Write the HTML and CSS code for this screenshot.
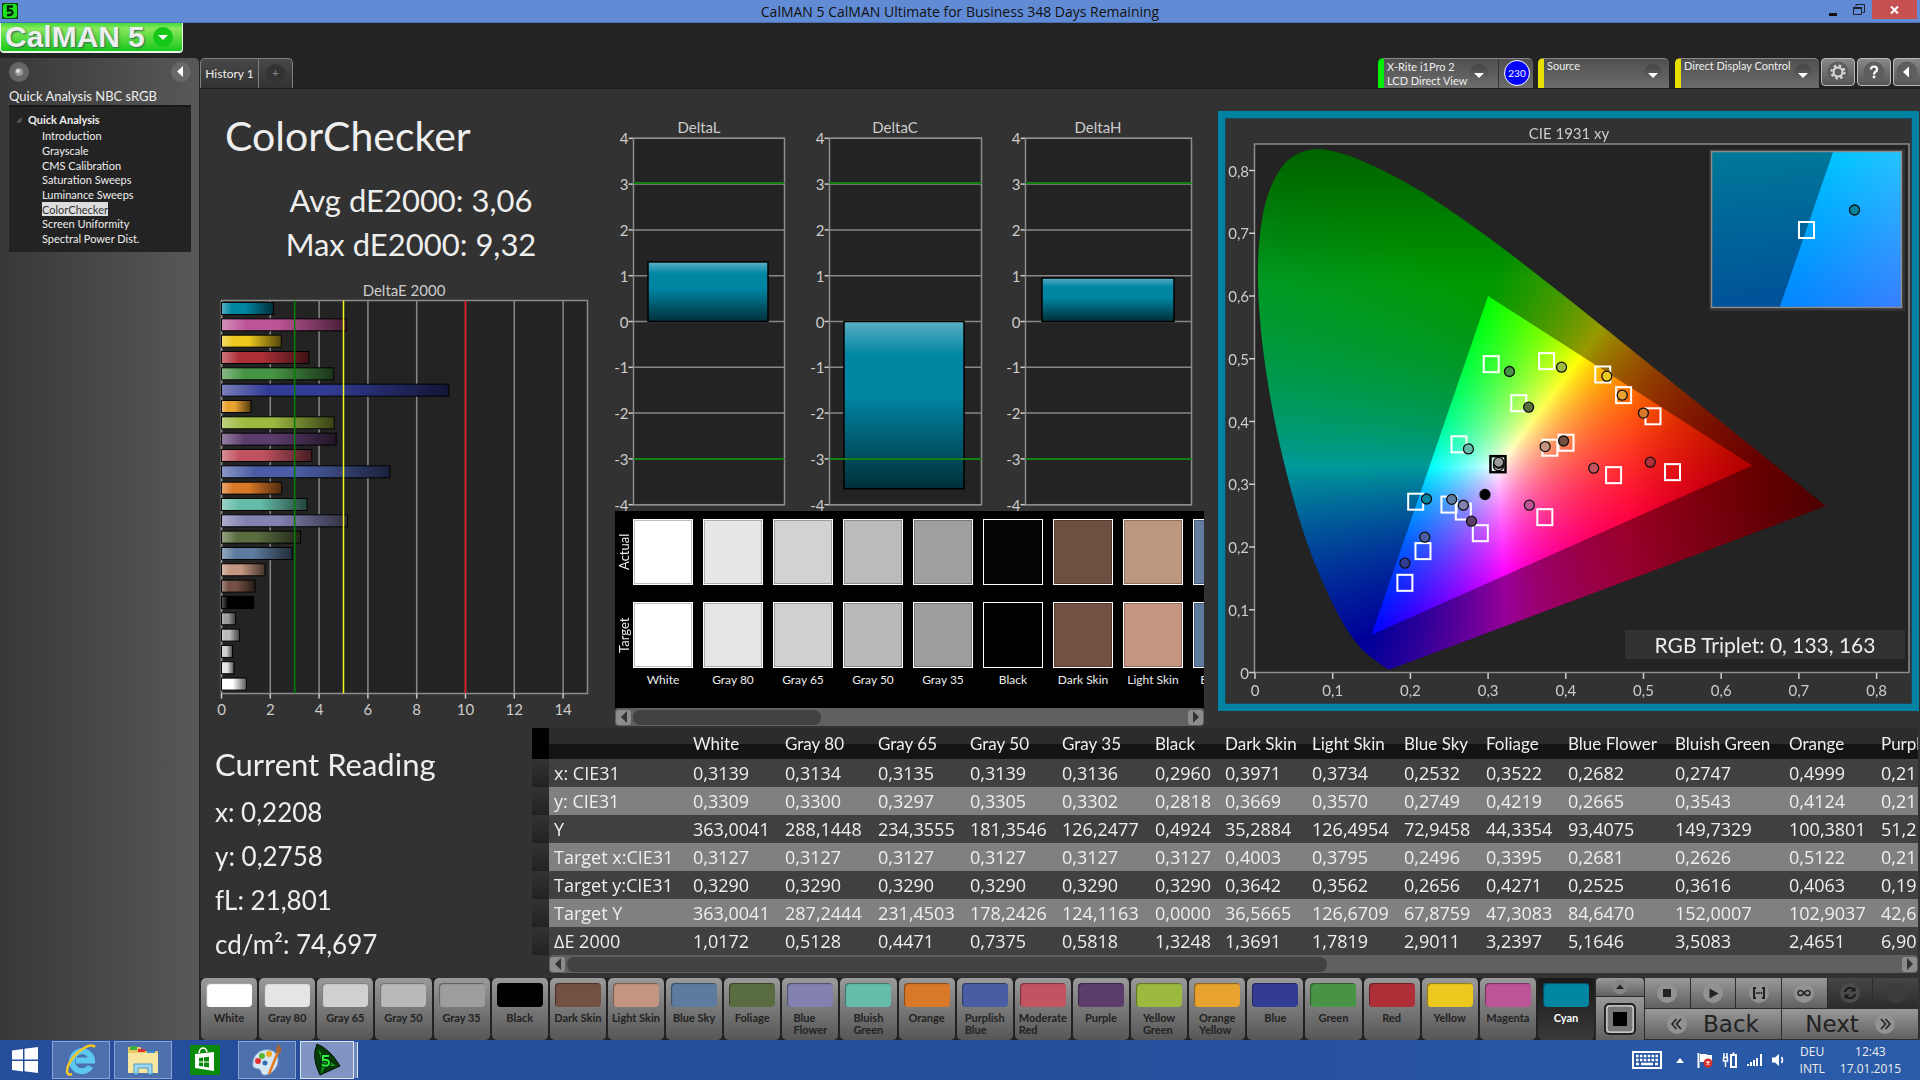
FILE: index.html
```html
<!DOCTYPE html>
<html lang="en">
<head>
<meta charset="utf-8">
<title>CalMAN 5 CalMAN Ultimate for Business 348 Days Remaining</title>
<link rel="stylesheet" href="styles.css">
</head>
<body>
<div class="titlebar">
  <svg class="app-icon" viewBox="0 0 16 16" aria-hidden="true"><rect width="16" height="16" fill="#0a4a0a"/><rect x="1" y="1" width="14" height="14" rx="3" fill="#1ee21e"/><path d="M11 3.500H6V7.500Q10.500 6.500 10.500 9.500Q10.500 12.500 5 12" fill="none" stroke="#021" stroke-width="2.400"/></svg>
  <span class="titlebar-text">CalMAN 5 CalMAN Ultimate for Business 348 Days Remaining</span>
  <div class="window-buttons">
    <button class="win-btn" aria-label="Minimize"><svg width="10" height="14" viewBox="0 0 10 14"><path d="M1 11.500h8" stroke="#111" stroke-width="3"/></svg></button>
    <button class="win-btn" aria-label="Restore"><svg width="12" height="12" viewBox="0 0 12 12" fill="none" stroke="#1b2233"><path d="M3 2.500V.500H11.500V8.500H9.500"/><path d="M.500 4.500h8v6h-8z"/><path d="M0 4h9" stroke-width="2"/></svg></button>
    <button class="win-btn win-close" aria-label="Close"><svg width="9" height="8" viewBox="0 0 9 8"><path d="M1 .500l7 7M8 .500l-7 7" stroke="#fff" stroke-width="2"/></svg></button>
  </div>
</div>

<div class="brandbar">
  <button class="logo"><span class="logo-text">CalMAN</span><span class="logo-text">5</span>
    <svg width="20" height="20" viewBox="0 0 20 20" aria-hidden="true"><circle cx="10" cy="10" r="10" fill="#15c818"/><path d="M5 8h10l-5 5z" fill="#fff"/></svg>
  </button>
</div>

<div class="app">
  <aside class="sidebar">
    <div class="sidebar-tools">
      <button class="round" aria-label="Pin"><svg width="20" height="20" viewBox="0 0 20 20"><circle cx="10" cy="10" r="10" fill="#666"/><circle cx="10" cy="10" r="4" fill="#999"/><circle cx="9" cy="9" r="2" fill="#ddd"/></svg></button>
      <button class="round" aria-label="Collapse"><svg width="20" height="20" viewBox="0 0 20 20"><circle cx="10" cy="10" r="10" fill="#686868"/><path d="M12 4v11l-6-5.500z" fill="#fff"/></svg></button>
    </div>
    <h2 class="sidebar-title">Quick Analysis NBC sRGB</h2>
    <nav class="tree">
      <div class="tree-head"><svg width="6" height="6" viewBox="0 0 6 6" aria-hidden="true"><path d="M5.500 0v5.500H0z" fill="#555"/></svg>Quick Analysis</div>
      <a href="#">Introduction</a>
      <a href="#">Grayscale</a>
      <a href="#">CMS Calibration</a>
      <a href="#">Saturation Sweeps</a>
      <a href="#">Luminance Sweeps</a>
      <a href="#" class="current">ColorChecker</a>
      <a href="#">Screen Uniformity</a>
      <a href="#">Spectral Power Dist.</a>
    </nav>
  </aside>

  <div class="content">
    <div class="toolbar">
      <div class="tabs">
        <button class="tab">History 1</button>
        <button class="tab tab-add" aria-label="Add history"><span class="plus">+</span></button>
      </div>
      <div class="devices">
        <div class="device device-meter"><button class="device-name">X-Rite i1Pro 2<br>LCD Direct View<span class="drop"></span></button><button class="count">230</button></div>
        <div class="device device-source"><button class="device-name">Source<span class="drop"></span></button></div>
        <div class="device device-display"><button class="device-name">Direct Display Control<span class="drop"></span></button></div>
        <button class="tool" aria-label="Settings"><svg width="22" height="22" viewBox="0 0 22 22"><circle cx="11" cy="11" r="10.500" fill="#5e5e5e"/><circle cx="11" cy="11" r="4.500" fill="none" stroke="#ddd" stroke-width="2"/><circle cx="11" cy="11" r="6.500" fill="none" stroke="#ddd" stroke-width="2" stroke-dasharray="2.500 2.600"/></svg></button>
        <button class="tool" aria-label="Help"><svg width="22" height="22" viewBox="0 0 22 22"><circle cx="11" cy="11" r="10.500" fill="#5e5e5e"/><path d="M8 8.500Q8 5.500 11 5.500T14 8.500Q14 10 12.500 10.800T11 13.500" fill="none" stroke="#fff" stroke-width="2.200"/><circle cx="11" cy="16" r="1.400" fill="#fff"/></svg></button>
        <button class="tool tool-last" aria-label="Collapse panel"><svg width="22" height="22" viewBox="0 0 22 22"><circle cx="11" cy="11" r="10.500" fill="#5e5e5e"/><path d="M13 5.500v11l-6-5.500z" fill="#fff"/></svg></button>
      </div>
    </div>

    <main class="workspace">
      <div class="overview">
        <section class="summary">
          <h1>ColorChecker</h1>
          <p class="stat">Avg dE2000: 3,06<br>Max dE2000: 9,32</p>
          <svg class="chart" id="delta-e" viewBox="0 0 406 440" role="img" aria-label="DeltaE 2000"></svg>
        </section>
        <section class="deltas">
          <div class="delta-charts">
            <svg class="chart" id="delta-l" viewBox="0 0 196 401" role="img" aria-label="DeltaL"></svg>
            <svg class="chart" id="delta-c" viewBox="0 0 196 401" role="img" aria-label="DeltaC"></svg>
            <svg class="chart" id="delta-h" viewBox="0 0 206 401" role="img" aria-label="DeltaH"></svg>
          </div>
          <div class="swatches">
            <div class="swatch-row"><span class="swatch-side">Actual</span><div class="swatch-list" id="actual"></div></div>
            <div class="swatch-row"><span class="swatch-side">Target</span><div class="swatch-list" id="target"></div></div>
            <div class="swatch-names" id="names"></div>
          </div>
          <div class="scrollbar"><button class="scroll-arrow" aria-label="Scroll left"><svg width="8" height="12" viewBox="0 0 8 12"><path d="M7 0v12L1 6z" fill="#333"/></svg></button><span class="scroll-track"><span class="thumb thumb-short"></span></span><button class="scroll-arrow" aria-label="Scroll right"><svg width="8" height="12" viewBox="0 0 8 12"><path d="M1 0v12l6-6z" fill="#333"/></svg></button></div>
        </section>
        <section class="cie">
          <div class="cie-panel">
            <canvas id="gamut" width="687" height="586"></canvas>
            <svg class="chart" id="cie-plot" viewBox="0 0 687 586" role="img" aria-label="CIE 1931 xy"></svg>
          </div>
        </section>
      </div>

      <div class="details">
        <section class="reading">
          <h2>Current Reading</h2>
          <p>x: 0,2208</p>
          <p>y: 0,2758</p>
          <p>fL: 21,801</p>
          <p>cd/m²: 74,697</p>
        </section>
        <section class="data">
          <div class="table-wrap">
          <table>
            <colgroup><col class="c-grip"><col class="c-label"><col class="c-92"><col class="c-93"><col class="c-92"><col class="c-92"><col class="c-93"><col class="c-70"><col class="c-87"><col class="c-92"><col class="c-82"><col class="c-82"><col class="c-107"><col class="c-114"><col class="c-92"><col class="c-114"></colgroup>
            <thead><tr><td></td><td></td><th>White</th><th>Gray 80</th><th>Gray 65</th><th>Gray 50</th><th>Gray 35</th><th>Black</th><th>Dark Skin</th><th>Light Skin</th><th>Blue Sky</th><th>Foliage</th><th>Blue Flower</th><th>Bluish Green</th><th>Orange</th><th>Purplish Blue</th></tr></thead>
            <tbody>
            <tr><td></td><th>x: CIE31</th><td>0,3139</td><td>0,3134</td><td>0,3135</td><td>0,3139</td><td>0,3136</td><td>0,2960</td><td>0,3971</td><td>0,3734</td><td>0,2532</td><td>0,3522</td><td>0,2682</td><td>0,2747</td><td>0,4999</td><td>0,21</td></tr>
            <tr><td></td><th>y: CIE31</th><td>0,3309</td><td>0,3300</td><td>0,3297</td><td>0,3305</td><td>0,3302</td><td>0,2818</td><td>0,3669</td><td>0,3570</td><td>0,2749</td><td>0,4219</td><td>0,2665</td><td>0,3543</td><td>0,4124</td><td>0,21</td></tr>
            <tr><td></td><th>Y</th><td>363,0041</td><td>288,1448</td><td>234,3555</td><td>181,3546</td><td>126,2477</td><td>0,4924</td><td>35,2884</td><td>126,4954</td><td>72,9458</td><td>44,3354</td><td>93,4075</td><td>149,7329</td><td>100,3801</td><td>51,2</td></tr>
            <tr><td></td><th>Target x:CIE31</th><td>0,3127</td><td>0,3127</td><td>0,3127</td><td>0,3127</td><td>0,3127</td><td>0,3127</td><td>0,4003</td><td>0,3795</td><td>0,2496</td><td>0,3395</td><td>0,2681</td><td>0,2626</td><td>0,5122</td><td>0,21</td></tr>
            <tr><td></td><th>Target y:CIE31</th><td>0,3290</td><td>0,3290</td><td>0,3290</td><td>0,3290</td><td>0,3290</td><td>0,3290</td><td>0,3642</td><td>0,3562</td><td>0,2656</td><td>0,4271</td><td>0,2525</td><td>0,3616</td><td>0,4063</td><td>0,19</td></tr>
            <tr><td></td><th>Target Y</th><td>363,0041</td><td>287,2444</td><td>231,4503</td><td>178,2426</td><td>124,1163</td><td>0,0000</td><td>36,5665</td><td>126,6709</td><td>67,8759</td><td>47,3083</td><td>84,6470</td><td>152,0007</td><td>102,9037</td><td>42,6</td></tr>
            <tr><td></td><th>ΔE 2000</th><td>1,0172</td><td>0,5128</td><td>0,4471</td><td>0,7375</td><td>0,5818</td><td>1,3248</td><td>1,3691</td><td>1,7819</td><td>2,9011</td><td>3,2397</td><td>5,1646</td><td>3,5083</td><td>2,4651</td><td>6,90</td></tr>
            </tbody>
          </table>
          </div>
          <div class="scrollbar scrollbar-table"><button class="scroll-arrow" aria-label="Scroll left"><svg width="8" height="12" viewBox="0 0 8 12"><path d="M7 0v12L1 6z" fill="#333"/></svg></button><span class="scroll-track"><span class="thumb thumb-long"></span></span><button class="scroll-arrow" aria-label="Scroll right"><svg width="8" height="12" viewBox="0 0 8 12"><path d="M1 0v12l6-6z" fill="#333"/></svg></button></div>
        </section>
      </div>

      <div class="bottombar">
        <div class="patches" id="patches"></div>
        <div class="side-controls">
          <button class="ctl ctl-up" aria-label="Expand"><svg width="16" height="16" viewBox="0 0 16 16"><circle cx="8" cy="8" r="7.500" fill="#858585"/><path d="M4 10h8l-4-4.500z" fill="#222"/></svg></button>
          <button class="ctl ctl-pattern" aria-label="Pattern"><svg width="34" height="34" viewBox="0 0 34 34"><rect x="2" y="2" width="30" height="30" rx="4" fill="#aaa" stroke="#222" stroke-width="2"/><rect x="4" y="4" width="26" height="26" rx="3" fill="#777" stroke="#ddd"/><rect x="10" y="10" width="14" height="14"/></svg></button>
        </div>
        <div class="transport">
          <button class="ctl" aria-label="Stop"><svg width="20" height="20" viewBox="0 0 20 20"><circle cx="10" cy="10" r="10" fill="#929292"/><path d="M6 6h8v8H6z" fill="#222"/></svg></button>
          <button class="ctl" aria-label="Play"><svg width="20" height="20" viewBox="0 0 20 20"><circle cx="10" cy="10" r="10" fill="#929292"/><path d="M6.500 5.500v10l9-5z" fill="#222"/></svg></button>
          <button class="ctl" aria-label="Read series"><svg width="20" height="20" viewBox="0 0 20 20"><circle cx="10" cy="10" r="10" fill="#929292"/><path d="M7 5H5v10h2M13 5h2v10h-2M7 10h1.500M9.300 10h1.500M11.600 10h1.500" fill="none" stroke="#222" stroke-width="2"/></svg></button>
          <button class="ctl" aria-label="Continuous"><svg width="20" height="20" viewBox="0 0 20 20"><circle cx="10" cy="10" r="10" fill="#929292"/><path d="M10 10C8 7 4 6.500 4 10s4 3 6 0 6-3.500 6 0-4 3-6 0z" fill="none" stroke="#222" stroke-width="1.500"/></svg></button>
          <button class="ctl ctl-dark" aria-label="Refresh"><svg width="20" height="20" viewBox="0 0 20 20"><circle cx="10" cy="10" r="10" fill="#4c4c4c"/><path d="M5 9a5 5 0 0 1 9-2M15 11a5 5 0 0 1-9 2" fill="none" stroke="#1c1c1c" stroke-width="2"/><path d="M15.500 3.500v5h-5zM4.500 16.500v-5h5z" fill="#1c1c1c"/></svg></button>
          <button class="ctl ctl-dark" aria-label="Record"><svg width="20" height="20" viewBox="0 0 20 20"><circle cx="10" cy="10" r="10" fill="#3c3c3c"/></svg></button>
          <button class="ctl ctl-wide"><svg width="20" height="20" viewBox="0 0 20 20" aria-hidden="true"><circle cx="10" cy="10" r="10" fill="#929292"/><path d="M9.500 5L5 10l4.500 5M14 5l-4.500 5 4.500 5" fill="none" stroke="#222" stroke-width="1.600"/></svg>Back</button>
          <button class="ctl ctl-wide">Next<svg width="20" height="20" viewBox="0 0 20 20" aria-hidden="true"><circle cx="10" cy="10" r="10" fill="#929292"/><path d="M6 5l4.500 5L6 15M10.500 5l4.500 5-4.500 5" fill="none" stroke="#222" stroke-width="1.600"/></svg></button>
        </div>
      </div>
    </main>
  </div>
</div>

<footer class="taskbar">
  <button class="task task-start" aria-label="Start"><svg width="26" height="26" viewBox="0 0 26 26" fill="#fff"><path d="M0 3.500L11 2v10.500H0zM12.500 1.800L26 0v12.500H12.500zM0 14h11v10.500L0 23zM12.500 14H26v12l-13.500-1.800z"/></svg></button>
  <button class="task task-open" aria-label="Internet Explorer"><svg width="34" height="34" viewBox="0 0 34 34"><path d="M26.500 23.500A10 10 0 1 1 28 17.500H12" fill="none" stroke="#5cc8f2" stroke-width="6"/><path d="M31 4C26-1 9 10 4 23c-2 6-1 10 4 8" fill="none" stroke="#f4c726" stroke-width="2.500"/></svg></button>
  <button class="task task-open" aria-label="File Explorer"><svg width="34" height="30" viewBox="0 0 34 30"><path d="M2 2h13v4h17v22H2z" fill="#e9c867"/><path d="M4 1h7v4H4z" fill="#3fae49"/><path d="M12 4h7v3h-7z" fill="#d33"/><path d="M21 6h8v3h-8z" fill="#3a8fd8"/><path d="M2 8h30v20H2z" fill="#f7e6a0"/><path d="M8 29V19h18v10h-4v-6H12v6z" fill="#9fd6f2" stroke="#4a9cc9"/></svg></button>
  <button class="task" aria-label="Store"><svg width="30" height="30" viewBox="0 0 30 30"><path d="M0 0h30v30H0z" fill="#0a8a0a"/><path d="M5 9l19-2v19L5 23z" fill="#fff"/><path d="M9 8c1-7 7-6 8-1" fill="none" stroke="#fff" stroke-width="1.500"/><path d="M9 13l4-.500v4H9zM14 12.300l5-.500v4.700h-5zM9 17.500h4v4L9 21zM14 17.500h5v5l-5-.800z" fill="#0a8a0a"/></svg></button>
  <button class="task task-open" aria-label="Paint"><svg width="32" height="32" viewBox="0 0 32 32"><path d="M14 6C6 7 1 14 2 22c1 3 4 2 6 3 3 1 1 5 5 6 7 0 14-7 14-15 0-7-6-11-13-10z" fill="#d5e6f5" stroke="#8fb0d0"/><circle cx="7" cy="17" r="3" fill="#d33"/><circle cx="11" cy="12" r="3" fill="#5bb531"/><circle cx="18" cy="10" r="3" fill="#f2a91d"/><circle cx="14" cy="19" r="2.500" fill="#2f6db5"/><path d="M27 8L18 30" stroke="#e0781e" stroke-width="2.500"/><path d="M25 8c0-4 2-6 1-8 4 2 6 6 3 9z" fill="#a8672f"/></svg></button>
  <button class="task task-active" aria-label="CalMAN 5"><svg width="30" height="34" viewBox="0 0 30 34"><path d="M5 1Q18 6 28 23L8 32Q-1 14 5 1z" fill="#053a08" stroke="#010"/><path d="M6 6l7 9 11 8-10 0-5 8 1-12z" fill="#0c9a14"/><path d="M17 13h-6v4q6-1 6 3t-7 2" fill="none" stroke="#021" stroke-width="4"/><path d="M17 13h-6v4q6-1 6 3t-7 2" fill="none" stroke="#2cf53a" stroke-width="2"/></svg></button>
  <div class="tray">
    <svg class="tray-keyboard" width="30" height="18" viewBox="0 0 30 18" aria-hidden="true"><rect x="1" y="1" width="28" height="16" fill="none" stroke="#fff" stroke-width="2"/><path d="M4 5h22M4 9h22" stroke="#fff" stroke-width="2.500" stroke-dasharray="2.500 1.400"/><path d="M4 13h3M9 13h12M23 13h3" stroke="#fff" stroke-width="2.500"/></svg>
    <svg class="tray-more" width="8" height="5" viewBox="0 0 8 5" aria-hidden="true"><path d="M0 5h8L4 0z" fill="#fff"/></svg>
    <svg width="16" height="16" viewBox="0 0 16 16" aria-hidden="true"><path d="M1.500 1v15" stroke="#fff" stroke-width="2"/><path d="M3 2h6l2 1h4v7H3z" fill="#fff"/><circle cx="11" cy="11" r="4.500" fill="#d8302a"/><path d="M9.500 9.500l3 3M12.500 9.500l-3 3" stroke="#fff" stroke-width="1.300"/></svg>
    <svg width="16" height="16" viewBox="0 0 16 16" aria-hidden="true" fill="none" stroke="#fff"><path d="M9 3h5v12H9zM10.500 1.500h2" stroke-width="2"/><path d="M2 1v4M5 1v4M1 5.500h5M1.500 6v3h4V6M3.500 9v6" stroke-width="1.500"/></svg>
    <svg width="16" height="12" viewBox="0 0 16 12" aria-hidden="true" fill="#fff"><path d="M0 10h2v2H0zM3 8h2v4H3zM6 6h2v6H6zM9 4h2v8H9zM13 0h2v12h-2z"/></svg>
    <svg width="14" height="14" viewBox="0 0 14 14" aria-hidden="true"><path d="M0 4.500h3L7 1v12L3 9.500H0z" fill="#fff"/><path d="M9.500 4q2 3 0 6" fill="none" stroke="#fff" stroke-width="1.500"/></svg>
    <span class="tray-text tray-lang">DEU<br>INTL</span>
    <span class="tray-text tray-clock">12:43<br>17.01.2015</span>
  </div>
</footer>
<script src="script.js"></script>
</body>
</html>
```
FILE: styles.css
```css
* { box-sizing: border-box; }
html, body { margin: 0; }
body {
  min-height: 100vh;
  display: flex;
  flex-direction: column;
  background: #232323;
  color: #eee;
  font-family: Lato, "Open Sans", sans-serif;
  font-size: 13px;
  overflow-x: hidden;
}
button { font: inherit; color: inherit; border: 0; padding: 0; background: none; }
h1, h2, p { margin: 0; font-weight: 400; }
svg, canvas { display: block; }

/* Window title bar */
.titlebar {
  display: grid;
  grid-template-columns: 1fr auto 1fr;
  height: 23px;
  background: #618bd5;
  color: #111;
  border-bottom: 1px solid #4a70b5;
}
.app-icon { width: 16px; height: 16px; margin: 3px 0 0 2px; }
.titlebar-text { font: 14px/24px "Open Sans", "Noto Sans", sans-serif; }
.window-buttons { display: flex; justify-content: flex-end; align-items: flex-start; padding-right: 3px; }
.win-btn { width: 26px; height: 19px; display: grid; place-items: center; }
.win-close { width: 45px; background: #c75050; }

.brandbar { height: 35px; }
.logo {
  display: flex;
  align-items: center;
  gap: 8px;
  width: 183px;
  height: 30px;
  padding-left: 4px;
  background: linear-gradient(#3fdc3a, #8ae85c 20%, #18c81a);
  border: solid #e8f8e8;
  border-width: 0 1px 2px;
  border-radius: 0 0 4px 4px;
}
.logo-text {
  font: bold 30px/28px "Liberation Sans", sans-serif;
  color: #eee;
  text-shadow: 1px 1px 2px #365;
}

.app { flex: 1; display: grid; grid-template-columns: 200px minmax(0, 1fr); }

/* Sidebar */
.sidebar {
  margin-right: 1px;
  padding: 4px 8px 0 9px;
  background: linear-gradient(90deg, #383838, #585858);
  border-radius: 0 5px 0 0;
}
.sidebar-tools { display: flex; justify-content: space-between; }
.sidebar-title { margin: 5px 0 0; font-size: 13px; line-height: 18px; }
.round { height: 20px; }
.tree {
  display: flex;
  flex-direction: column;
  align-items: flex-start;
  min-height: 147px;
  padding: 5px 0 0 33px;
  background: #232323;
  border-top: 2px solid #181818;
  font-size: 11px;
}
.tree-head { display: flex; align-items: center; gap: 6px; margin-left: -26px; font-weight: 700; line-height: 16px; }
.tree a { color: #eee; text-decoration: none; line-height: 15px; height: 15px; }
.tree a:nth-of-type(3n) { height: 14px; }
.tree .current { background: #ddd; color: #333; }

.content { display: flex; flex-direction: column; min-width: 0; }
.toolbar { display: flex; justify-content: space-between; height: 31px; border-bottom: 1px solid #1c1c1c; }
.tabs { display: flex; }
.tab {
  width: 59px;
  background: linear-gradient(#484848, #323232);
  border: 1px solid #808080;
  border-bottom: 0;
  font-size: 12px;
}
.tab:first-child { border-radius: 5px 0 0 0; }
.tab-add { width: 34px; border-left: 0; border-radius: 0 5px 0 0; display: grid; place-items: center; }
.plus { width: 19px; height: 19px; border-radius: 50%; background: #333; color: #888; line-height: 18px; }

.devices { display: flex; align-items: flex-start; overflow: hidden; }
.device {
  display: flex;
  height: 30px;
  margin-right: 5px;
  background: linear-gradient(#505050, #6c6c6c);
  border-top: 1px solid #888;
  border-left: 6px solid #e8e000;
  border-radius: 5px 5px 0 0;
}
.device-meter { width: 155px; border-left-color: #0e0; }
.device-source { width: 131px; margin-right: 6px; }
.device-display { width: 144px; margin-right: 2px; }
.device-name {
  flex: 1;
  position: relative;
  padding-left: 3px;
  text-align: left;
  font-size: 11px;
  line-height: 14px;
  display: flex;
  align-items: flex-start;
  white-space: nowrap;
}
.device-meter .device-name { display: block; border-right: 1px solid #333; }
.drop {
  position: absolute;
  right: 6px;
  top: 5px;
  width: 20px;
  height: 20px;
  border-radius: 50%;
  background: linear-gradient(#444, #6c6c6c);
}
.drop::after { content: ""; position: absolute; left: 5px; top: 9px; border: 5px solid transparent; border-top-color: #fff; border-bottom: 0; }
.device-meter .drop { right: 9px; }
.count {
  width: 26px;
  height: 26px;
  margin: 1px 3px 0 5px;
  flex: none;
  border: 1px solid #fff;
  border-radius: 50%;
  background: #00f;
  color: #fff;
  font-size: 10px;
}
.tool {
  width: 34px;
  height: 28px;
  margin-right: 2px;
  display: grid;
  place-items: center;
  border: 1px solid #bbb;
  border-radius: 4px;
  background: linear-gradient(#888, #555);
}
.tool-last { width: 27px; margin-right: 0; border-right: 0; border-radius: 4px 0 0 4px; }

/* Workspace */
.workspace { flex: 1; display: flex; flex-direction: column; background: #323232; }
.overview {
  flex: 1;
  display: grid;
  grid-template-columns: minmax(0, 406fr) minmax(0, 598fr) minmax(0, 716fr);
}
.chart { width: 100%; height: auto; font-family: Lato, sans-serif; }
.summary h1 { margin: 20px 0 0 25px; font-size: 41px; line-height: 54px; }
.stat { margin: 15px 0 14px 16px; text-align: center; font-size: 31px; line-height: 44px; }
.delta-charts { display: grid; grid-template-columns: 196fr 196fr 206fr; margin-top: 21px; }
.swatches { margin-left: 9px; height: 197px; padding-top: 8px; background: #000; overflow: hidden; }
.swatch-row { display: flex; height: 66px; margin-bottom: 17px; }
.swatch-side { flex: none; width: 18px; writing-mode: vertical-rl; transform: rotate(180deg); text-align: center; line-height: 18px; font-size: 13px; }
.swatch-list { display: flex; gap: 10px; }
.swatch { flex: none; width: 60px; border: 1px solid #fff; box-shadow: inset 0 0 0 1px rgba(0, 0, 0, .25); }
.swatch-names { display: flex; margin: -15px 0 0 13px; font-size: 12px; line-height: 20px; }
.swatch-names span { flex: none; width: 70px; text-align: center; }

.scrollbar { display: flex; align-items: center; gap: 2px; height: 18px; margin-left: 9px; padding: 0 1px; background: #606060; border-radius: 4px; }
.scroll-arrow { width: 15px; height: 15px; display: grid; place-items: center; background: #8c8c8c; border-radius: 3px; flex: none; }
.scroll-track { flex: 1; }
.thumb { display: block; height: 15px; border-radius: 7px; background: #424242; }
.thumb-short { width: 34%; }
.thumb-long { width: 57%; }

.cie { padding: 22px 1px 0 14px; }
.cie-panel { display: grid; border: 7px solid #0083a3; outline: 1px solid #245; outline-offset: -8px; }
.cie-panel > * { grid-area: 1 / 1; width: 100%; height: auto; }

.details { display: grid; grid-template-columns: 332px minmax(0, 1fr); padding-right: 2px; }
.reading { padding: 14px 0 0 15px; }
.reading h2 { font-size: 31px; line-height: 44px; margin-bottom: 4px; }
.reading p { font-size: 26px; line-height: 44px; }
.table-wrap { overflow: hidden; }
table { width: 1458px; table-layout: fixed; border-collapse: collapse; }
.c-grip { width: 17px; }
.c-label { width: 139px; }
.c-70 { width: 70px; }
.c-82 { width: 82px; }
.c-87 { width: 87px; }
.c-92 { width: 92px; }
.c-93 { width: 93px; }
.c-107 { width: 107px; }
.c-114 { width: 114px; }
td, th { padding: 0 0 0 5px; text-align: left; font: 18px/28px "Open Sans", "Noto Sans", sans-serif; height: 28px; white-space: nowrap; }
thead tr { background: linear-gradient(#2c2c2c 50%, #141414 50%); height: 31px; }
thead th { font: 17px/30px Lato, sans-serif; }
tbody tr { background: #404040; }
tbody tr:nth-child(even) { background: #808080; }
tbody td:first-child { background: linear-gradient(#333, #222); }
thead td:first-child { background: #000; }
.scrollbar-table { margin-left: 17px; }

/* Patch selector and transport controls */
.bottombar { display: flex; height: 67px; padding: 5px 2px 0 0; }
.patches { flex: 1; display: flex; background: #222; }
.patch {
  flex: 1 1 0;
  min-width: 0;
  display: flex;
  flex-direction: column;
  align-items: center;
  padding-top: 5px;
  margin-left: 1px;
  border-right: 1px solid #222;
  border-radius: 5px;
  background: linear-gradient(#9a9a9a, #565656);
  color: #222;
  font-size: 11px;
  font-weight: 700;
  line-height: 12px;
  text-align: left;
}
.patch i { width: 46px; height: 24px; margin-bottom: 5px; border-radius: 4px; box-shadow: inset 1px 1px 1px rgba(0, 0, 0, .4); }
.patch.selected { background: linear-gradient(#181818, #3a3a3a); color: #fff; }
.ctl { display: grid; place-items: center; background: linear-gradient(#999, #606060); color: #222; }
.side-controls { flex: none; width: 50px; display: grid; grid-template-rows: 18px 1fr; gap: 1px; padding: 0 1px; background: #2c2c2c; }
.ctl-up { border-radius: 4px 4px 0 0; }
.transport { flex: none; width: 273px; display: grid; grid-template-columns: repeat(6, 1fr); grid-template-rows: 30px 1fr; gap: 1px; background: #2c2c2c; padding-bottom: 1px; }
.ctl-dark { background: linear-gradient(#464646, #2c2c2c); }
.ctl-wide { grid-column: span 3; display: flex; align-items: center; justify-content: center; gap: 16px; font: 23px/28px "DejaVu Sans", sans-serif; }

/* Taskbar */
.taskbar { display: flex; height: 40px; padding: 1px 19px 1px 0; background: linear-gradient(90deg, #264d9b, #264f9e 60%, #2a5caa); }
.task { width: 58px; display: grid; place-items: center; margin-right: 4px; }
.task-start { width: 50px; margin-right: 2px; }
.task-open { background: #4c6fae; border: 1px solid #8ba3cd; }
.task-active { width: 54px; background: #8095c3; border: 1px solid #dde4f2; box-shadow: 4px 0 0 -1px #6d88bb, 5px 0 0 -1px #dde4f2; }
.tray { margin-left: auto; display: flex; align-items: center; gap: 9px; }
.tray-keyboard { margin-right: 5px; }
.tray-more { margin-right: 4px; }
.tray-text { font: 12px/17px "Open Sans", sans-serif; text-align: center; }
.tray-lang { margin: 0 6px 0 5px; }
```
FILE: script.js
```js
const patches = [
  ['White', '#ffffff', 1.02, '#ffffff'], ['Gray 80', '#e5e5e5', .51, '#e6e6e4'],
  ['Gray 65', '#d0d0d0', .45, '#d2d2d2'], ['Gray 50', '#b9b9b9', .74, '#bcbbb9'],
  ['Gray 35', '#9d9d9d', .58, '#9f9f9d'], ['Black', '#000000', 1.32, '#040406'],
  ['Dark Skin', '#735041', 1.37, '#6e5040'], ['Light Skin', '#c49580', 1.78, '#bd967f'],
  ['Blue Sky', '#5d7b9e', 2.9, '#637d9f'], ['Foliage', '#5a6d41', 3.24],
  ['Blue Flower', '#8281b0', 5.16], ['Bluish Green', '#65bda9', 3.51],
  ['Orange', '#d97829', 2.47], ['Purplish Blue', '#4a5da4', 6.9],
  ['Moderate Red', '#c25361', 3.7], ['Purple', '#5c3c6c', 4.7],
  ['Yellow Green', '#9dba40', 4.62], ['Orange Yellow', '#e8a22f', 1.21],
  ['Blue', '#333c95', 9.32], ['Green', '#489446', 4.6], ['Red', '#af2f38', 3.58],
  ['Yellow', '#edc81f', 2.45], ['Magenta', '#bc5496', 5.12], ['Cyan', '#0085a3', 2.13]
];
const el = id => document.getElementById(id);
const text = (x, y, s, size = 15, anchor = 'middle', fill = '#ccc') =>
  `<text x="${x}" y="${y}" font-size="${size}" text-anchor="${anchor}" fill="${fill}">${s}</text>`;
const line = (x1, y1, x2, y2, c, w = 1) =>
  `<path d="M${x1} ${y1}L${x2} ${y2}" stroke="${c}" stroke-width="${w}"/>`;
const sheen = (id, dir) => `<linearGradient id="${id}" ${dir}>
  <stop offset="0" stop-color="#fff" stop-opacity=".35"/><stop offset=".2" stop-color="#fff" stop-opacity="0"/>
  <stop offset=".45" stop-opacity="0"/><stop offset="1" stop-opacity=".65"/></linearGradient>`;

/* Patch buttons and swatches */
el('patches').innerHTML = patches.map(([n, c]) => {
  const label = ['Dark Skin', 'Light Skin', 'Blue Sky'].includes(n) || /\d/.test(n) ? n : n.replace(' ', '<br>');
  return `<button class="patch${n === 'Cyan' ? ' selected' : ''}"><i style="background:${c}"></i><span>${label}</span></button>`;
}).join('');
const shown = patches.slice(0, 9);
el('actual').innerHTML = shown.map(p => `<span class="swatch" style="background:${p[3]}"></span>`).join('');
el('target').innerHTML = shown.map(p => `<span class="swatch" style="background:${p[1]}"></span>`).join('');
el('names').innerHTML = shown.map(p => `<span>${p[0]}</span>`).join('');

/* DeltaE 2000 bars */
(() => {
  const X = v => 21.5 + v * 24.4, top = 20.5, bottom = 413.5;
  let s = `<defs>${sheen('sheen-h', '')}</defs>` + text(204, 16, 'DeltaE 2000');
  s += `<rect x="21.5" y="${top}" width="366" height="393" fill="#232323" stroke="#8c8c8c" stroke-width="1.5"/>`;
  for (let v = 0; v < 15; v += 2) {
    s += line(X(v), top, X(v), bottom, '#888', 1.5) + line(X(v), bottom, X(v), bottom + 5, '#ccc', 1.5);
    s += text(X(v), 435, v);
  }
  patches.slice().reverse().forEach(([, c, v], i) => {
    const y = top + 2 + i * 16.33, w = v * 24.4;
    s += `<rect x="21.5" y="${y}" width="${w}" height="12" fill="${c}"/>`;
    s += `<rect x="21.5" y="${y}" width="${w}" height="12" fill="url(#sheen-h)" stroke="#000"/>`;
  });
  s += line(X(3), top, X(3), bottom, '#008000', 1.5) + line(X(5), top, X(5), bottom, '#f5f520', 1.5) + line(X(10), top, X(10), bottom, '#f01010', 1.5);
  el('delta-e').innerHTML = s;
})();

/* DeltaL, DeltaC and DeltaH */
[['L', 151, 93, 1.3, 42, 120], ['C', 152, 93, -3.65, 42, 120], ['H', 166, 100, .95, 44, 132]].forEach(([n, w, cx, v, bx, bw]) => {
  const Y = k => 211.5 - k * 45.8, L = 27.5;
  let s = `<defs>${sheen('sheen-' + n, 'x2="0" y2="1"')}</defs>` + text(cx, 23, 'Delta' + n);
  s += `<rect x="${L}" y="${Y(4)}" width="${w}" height="366.4" fill="#232323"/>`;
  for (let k = -4; k <= 4; k++) s += line(L, Y(k), L + w, Y(k), '#888', 1.5) + line(L - 5, Y(k), L, Y(k), '#ccc', 1.5) + text(L - 5, Y(k) + 6, k, 15, 'end');
  s += `<rect x="${L}" y="${Y(4)}" width="${w}" height="366.4" fill="none" stroke="#8c8c8c" stroke-width="1.5"/>`;
  const r = `x="${bx}" y="${Math.min(Y(v), Y(0))}" width="${bw}" height="${Math.abs(v) * 45.8}"`;
  s += `<rect ${r} fill="#0085a3"/><rect ${r} fill="url(#sheen-${n})" stroke="#000" stroke-width="1.5"/>`;
  s += line(L, Y(3) - 1, L + w, Y(3) - 1, '#118011', 2) + line(L, Y(-3), L + w, Y(-3), '#118011', 2);
  el('delta-' + n.toLowerCase()).innerHTML = s;
});

/* CIE 1931 chromaticity diagram */
const PX = x => 30 + x * 777, PY = y => 554.5 - y * 627.5;
const locus = [.1741,.005,.1714,.0051,.1644,.0109,.1566,.0177,.144,.0297,.1355,.0399,.1241,.0578,.1096,.0868,.0913,.1327,.0687,.2007,.0454,.295,.0235,.4127,.0082,.5384,.0039,.6548,.0139,.7502,.0389,.812,.0743,.8338,.1142,.8262,.1547,.8059,.1929,.7816,.2296,.7543,.3016,.6923,.3731,.6245,.4441,.5547,.5125,.4866,.5752,.4242,.627,.3725,.6658,.334,.6915,.3083,.719,.2809,.7347,.2653];
function colour(x, y) {
  y = Math.max(y, .0005);
  const A = x / y, C = (1 - x - y) / y;
  const lin = [3.2406 * A - 1.5372 - .4986 * C, -.9689 * A + 1.8758 + .0415 * C, .0557 * A - .204 + 1.057 * C];
  const m = Math.max(...lin);
  const red = Math.min(1, Math.max(0, (x - .48) / .25)), green = Math.min(1, Math.max(0, (y - .62) / .21));
  const f = 255 * (1 - .5 * red) * (1 - .35 * green);
  return lin.map(v => f * Math.max(0, v / m));
}
function layer(w, h, at, gain) {
  const c = document.createElement('canvas'); c.width = w; c.height = h;
  const g = c.getContext('2d'), d = g.createImageData(w, h);
  for (let j = 0, k = 0; j < h; j++) for (let i = 0; i < w; i++) {
    const q = colour(...at(i, j));
    for (let n = 0; n < 3; n++) d.data[k++] = q[n] * gain;
    d.data[k++] = 255;
  }
  g.putImageData(d, 0, 0);
  return c;
}
const g = el('gamut').getContext('2d');
g.fillStyle = '#232323'; g.fillRect(30, 26, 654, 528);
function region(points, X, Y, image, ox, oy) {
  g.save(); g.beginPath();
  for (let i = 0; i < points.length; i += 2) g.lineTo(X(points[i]), Y(points[i + 1]));
  g.closePath(); g.clip(); g.drawImage(image, ox, oy); g.restore();
}
const at = (i, j) => [(i - 30) / 777, (554.5 - j) / 627.5];
const triangle = [.64, .33, .3, .6, .15, .06];
/* Smooths the coarse locus samples with a Catmull-Rom pass. */
const smooth = [];
for (let i = 0; i < locus.length; i += 2) for (let t = 0; t < 1; t += .125) for (let n = 0; n < 2; n++) {
  const p = k => locus[Math.min(Math.max(i + 2 * k, 0), locus.length - 2) + n];
  smooth.push(.5 * (2 * p(0) + (p(1) - p(-1)) * t + (2 * p(-1) - 5 * p(0) + 4 * p(1) - p(2)) * t * t + (3 * p(0) - p(-1) - 3 * p(1) + p(2)) * t ** 3));
}
region(smooth, PX, PY, layer(687, 586, at, .6), 0, 0);
region(triangle, PX, PY, layer(687, 586, at, 1), 0, 0);
/* Inset, five times enlarged round the selected patch */
g.fillStyle = '#323232'; g.fillRect(484, 31, 196, 162);
const IX = x => 581.5 + (x - .2084) * 3885, IY = y => 112 - (y - .27) * 3137;
const near = (i, j) => [.2084 + (i - 95) / 3885, .27 - (j - 78) / 3137];
g.save(); g.beginPath(); g.rect(487, 34, 190, 156); g.clip();
g.drawImage(layer(190, 156, near, .6), 487, 34);
region(triangle, IX, IY, layer(190, 156, near, 1), 487, 34);
g.restore();

(() => {
  let s = text(344, 21, 'CIE 1931 xy') + '<rect x="29.5" y="26" width="654.5" height="528.5" fill="none" stroke="#8c8c8c" stroke-width="1.5"/>';
  for (let k = 0; k <= 8; k++) {
    const n = k ? '0,' + k : '0';
    s += line(PX(k / 10), 555, PX(k / 10), 561, '#ccc', 1.5) + text(PX(k / 10), 578, n);
    s += line(24, PY(k / 10), 30, PY(k / 10), '#ccc', 1.5) + text(24, PY(k / 10) + 6, n, 15, 'end');
  }
  const targets = [.4003,.3662,.3795,.3582,.2496,.2676,.3395,.4291,.2681,.2565,.2626,.3636,.5122,.4083,.2162,.1934,.4615,.3145,.29,.222,.3753,.4962,.4744,.442,.1929,.1429,.304,.4914,.5373,.3193,.4476,.4749,.373,.2475,.2068,.2722];
  const box = (x, y, c) => `<rect x="${x - 7.5}" y="${y - 8}" width="15" height="16" fill="none" stroke="${c}" stroke-width="2"/>`;
  const dot = (x, y, c) => `<circle cx="${x}" cy="${y}" r="5" fill="${c}" stroke="#111" stroke-width="1.3"/>`;
  for (let i = 0; i < targets.length; i += 2) s += box(PX(targets[i]), PY(targets[i + 1]), '#fff');
  s += box(PX(.3127), PY(.332), '#000').replace('stroke-width="2"', 'stroke-width="2.5"');
  const actual = [.3139,.3309,.3134,.33,.3135,.3297,.3139,.3335,.3136,.335,.296,.2837,.3971,.3689,.3734,.36,.2532,.2759,.3522,.4229,.2682,.2665,.2747,.3563,.4999,.4134,.2185,.2157,.4359,.3256,.2786,.2412,.3945,.4866,.4726,.442,.1929,.1742,.3275,.4797,.5087,.3352,.4528,.4722,.3531,.2667,.2208,.2765];
  patches.forEach(([, c], i) => { s += dot(PX(actual[2 * i]), PY(actual[2 * i + 1]), c); });
  s += '<rect x="486.5" y="33.5" width="190" height="156" fill="none" stroke="#8c8c8c" stroke-width="1.5"/>';
  s += box(581.5, 112, '#fff') + dot(629.5, 92, '#0085a3');
  s += '<rect x="400" y="512" width="280" height="29" fill="#323232"/>' + text(540, 535, 'RGB Triplet: 0, 133, 163', 21, 'middle', '#eee');
  el('cie-plot').innerHTML = s;
})();
```
